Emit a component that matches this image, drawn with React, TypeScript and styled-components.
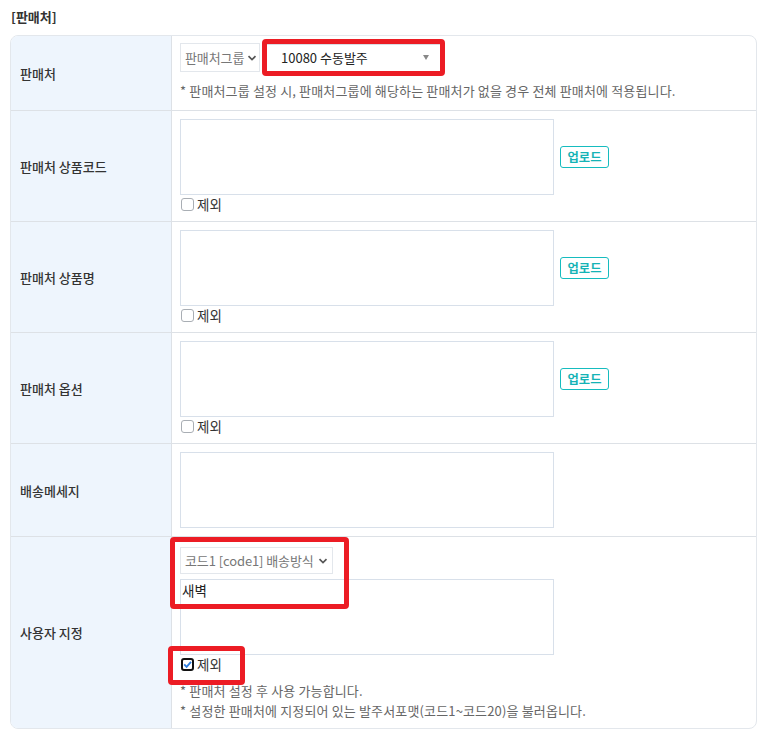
import React from 'react'
import styled, { createGlobalStyle } from 'styled-components'

const GlobalStyle = createGlobalStyle`
  html, body {
    margin: 0;
    padding: 0;
    background: #fff;
  }
  body {
    font-family: 'Noto Sans CJK KR', 'Noto Sans', sans-serif;
    color: #333;
  }
`

const Page = styled.div`
  padding: 8px 13px 10px 10px;
`

const Title = styled.div`
  font-size: 13px;
  font-weight: 700;
  color: #333;
  line-height: 18px;
  padding-left: 1px;
  margin-bottom: 9px;
`

const Table = styled.div`
  border: 1px solid #e3e7ec;
  border-radius: 8px;
  overflow: hidden;
`

const Row = styled.div`
  display: grid;
  grid-template-columns: 161px 1fr;
  & + & {
    border-top: 1px solid #dde1e6;
  }
`

const Label = styled.div`
  background: #eef5fd;
  border-right: 1px solid #dde1e6;
  display: flex;
  align-items: center;
  padding-left: 9px;
  font-size: 13px;
  font-weight: 500;
  color: #333;
`

const Value = styled.div<{ $top?: number; $bottom?: number }>`
  position: relative;
  padding: ${p => p.$top ?? 8}px 8px ${p => p.$bottom ?? 8}px 8px;
  display: flex;
  flex-direction: column;
  align-items: flex-start;
`

const SelectLine = styled.div`
  display: flex;
  gap: 6px;
  align-items: center;
`

const Select = styled.div<{ $width: number; $height?: number; $white?: boolean }>`
  width: ${p => p.$width}px;
  height: ${p => p.$height ?? 29}px;
  box-sizing: border-box;
  border: 1px solid ${p => (p.$white ? '#d8dde3' : '#e3e7ec')};
  background: #fff;
  display: flex;
  align-items: center;
  justify-content: space-between;
  gap: 3px;
  padding: 0 ${p => (p.$white ? 12 : 4)}px 0 ${p => (p.$white ? 14 : 4)}px;
  font-size: 13px;
  letter-spacing: ${p => (p.$white ? 0 : -0.1)}px;
  color: ${p => (p.$white ? '#222' : '#777')};
  white-space: nowrap;
  overflow: hidden;
  svg {
    flex-shrink: 0;
  }
`

const Chevron = () => (
  <svg width="10" height="10" viewBox="0 0 10 10">
    <path d="M1.5 3.2 L5 6.6 L8.5 3.2" fill="none" stroke="#555" strokeWidth="1.7" />
  </svg>
)

const Caret = styled.span`
  flex-shrink: 0;
  width: 0;
  height: 0;
  border-left: 3.5px solid transparent;
  border-right: 3.5px solid transparent;
  border-top: 5px solid #888;
`

const Note = styled.div<{ $gap?: number }>`
  font-size: 13px;
  letter-spacing: 0.15px;
  line-height: 20px;
  color: #666;
  margin-top: ${p => p.$gap ?? 0}px;
`

const FieldLine = styled.div`
  display: flex;
  align-items: center;
  gap: 6px;
`

const TextBox = styled.div<{ $gap?: number }>`
  width: 374px;
  height: 76px;
  box-sizing: border-box;
  border: 1px solid #d8e0ea;
  background: #fff;
  margin-top: ${p => p.$gap ?? 0}px;
  font-size: 13.5px;
  color: #222;
  padding: 1px 0 0 1px;
  line-height: 18px;
`

const UploadButton = styled.button`
  width: 49px;
  height: 22px;
  box-sizing: border-box;
  border: 1px solid #16bcbf;
  border-radius: 3px;
  background: #fff;
  color: #16b3b6;
  font-family: inherit;
  font-size: 12.3px;
  font-weight: 700;
  padding: 0;
  line-height: 20px;
`

const CheckLine = styled.label`
  display: flex;
  align-items: center;
  gap: 3px;
  height: 18px;
  font-size: 13.5px;
  color: #333;
`

const Box = styled.span<{ $checked?: boolean }>`
  width: 13px;
  height: 13px;
  box-sizing: border-box;
  border: ${p => (p.$checked ? '2px solid #111' : '1px solid #a9aeb4')};
  border-radius: 3px;
  background: #fff;
  display: flex;
  align-items: center;
  justify-content: center;
  margin-left: 1px;
`

const Mark = styled.div<{ $x: number; $y: number; $w: number; $h: number }>`
  position: absolute;
  left: ${p => p.$x}px;
  top: ${p => p.$y}px;
  width: ${p => p.$w}px;
  height: ${p => p.$h}px;
  box-sizing: border-box;
  border: 5px solid #ec1c24;
  border-radius: 4px;
  pointer-events: none;
`

const Check = ({ checked }: { checked?: boolean }) => (
  <CheckLine>
    <Box $checked={checked}>
      {checked && (
        <svg width="9" height="9" viewBox="0 0 9 9">
          <path d="M1.2 4.4 L3.6 6.8 L8 1.8" fill="none" stroke="#2f7fe0" strokeWidth="1.9" />
        </svg>
      )}
    </Box>
    제외
  </CheckLine>
)

const UploadField = () => (
  <>
    <FieldLine>
      <TextBox />
      <UploadButton>업로드</UploadButton>
    </FieldLine>
    <Check />
  </>
)

export default function App() {
  return (
    <Page>
      <GlobalStyle />
      <Title>[판매처]</Title>
      <Table>
        <Row>
          <Label>판매처</Label>
          <Value $top={7} $bottom={9}>
            <SelectLine>
              <Select $width={80}>
                판매처그룹 <Chevron />
              </Select>
              <Select $width={176} $height={28} $white>
                10080 수동발주 <Caret />
              </Select>
            </SelectLine>
            <Note $gap={9}>
              * 판매처그룹 설정 시, 판매처그룹에 해당하는 판매처가 없을 경우 전체 판매처에 적용됩니다.
            </Note>
            <Mark $x={90} $y={3} $w={183} $h={37} />
          </Value>
        </Row>
        <Row>
          <Label>판매처 상품코드</Label>
          <Value>
            <UploadField />
          </Value>
        </Row>
        <Row>
          <Label>판매처 상품명</Label>
          <Value>
            <UploadField />
          </Value>
        </Row>
        <Row>
          <Label>판매처 옵션</Label>
          <Value>
            <UploadField />
          </Value>
        </Row>
        <Row>
          <Label>배송메세지</Label>
          <Value>
            <TextBox />
          </Value>
        </Row>
        <Row>
          <Label>사용자 지정</Label>
          <Value $top={10} $bottom={7}>
            <Select $width={153} $height={27}>
              코드1 [code1] 배송방식 <Chevron />
            </Select>
            <TextBox $gap={5}>새벽</TextBox>
            <Check checked />
            <Note $gap={8}>* 판매처 설정 후 사용 가능합니다.</Note>
            <Note>* 설정한 판매처에 지정되어 있는 발주서포맷(코드1~코드20)을 불러옵니다.</Note>
            <Mark $x={-2} $y={0} $w={179} $h={72} />
            <Mark $x={-4} $y={109} $w={77} $h={39} />
          </Value>
        </Row>
      </Table>
    </Page>
  )
}
